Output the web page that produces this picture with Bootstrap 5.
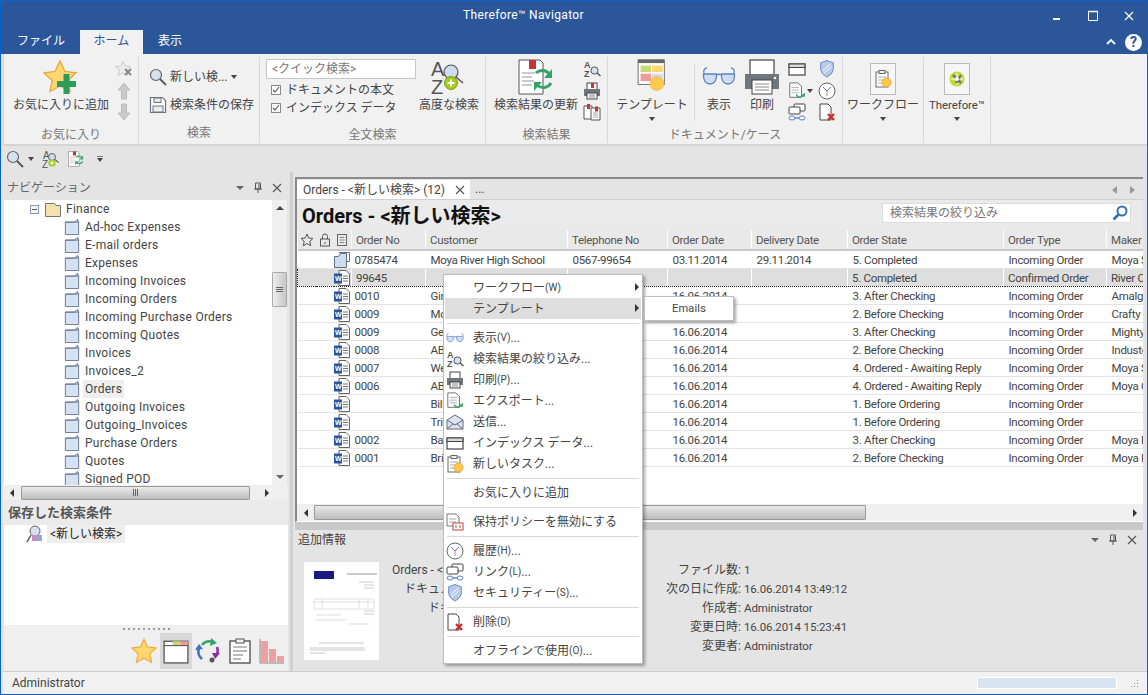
<!DOCTYPE html>
<html lang="ja">
<head>
<meta charset="utf-8">
<title>Therefore Navigator</title>
<link href="https://cdn.jsdelivr.net/npm/bootstrap@5.3.0/dist/css/bootstrap.min.css" rel="stylesheet">
<style>
html,body{margin:0;height:100%;overflow:hidden;background:#e4e4e4}
body,.win,.win .table,.win input{font-family:Roboto,"Noto Sans CJK JP",sans-serif;font-size:12px;color:#444;line-height:18px}
.win{position:relative;width:1148px;height:695px;border:1px solid #0a62c6;background:#e4e4e4;overflow:hidden;display:flex;flex-direction:column}
svg{display:block;flex:none}
.i14{width:14px;height:14px}.i16{width:16px;height:16px}.i18{width:18px;height:18px}.i20{width:20px;height:20px}
.i26{width:26px;height:26px}.i36{width:36px;height:36px}.i34{width:34px;height:20px}
.tbar{height:29px;background:#2b579a;color:#fff;flex:none;position:relative}
.ttl{padding-left:462px;line-height:29px;color:#fff;letter-spacing:.35px}
.wbtns{position:absolute;right:0;top:0;height:29px}
.wb{width:36px;height:29px;display:flex;align-items:center;justify-content:center}
.tabs{height:24px;background:#2b579a;flex:none;padding-left:1px}
.rtab{height:24px;line-height:23px;font-size:12px;color:#fff;padding:0 15px}
.rtab-a{background:#f1f1f1;color:#2b579a;padding:0 13.5px;width:63px}
.rtab-f{width:78px;padding:0 0 0 15px}
.rhelp{margin-left:auto;gap:7px;padding-right:5px}
.qm{width:17px;height:17px;border-radius:50%;background:#fff;color:#2b579a;font-weight:700;font-size:14px;line-height:17px;text-align:center}
.ribbon{height:92px;flex:none;background:#f1f1f1;margin-left:2px;border-left:1px solid #d4d4d4;border-bottom:2px solid #d4d4d4}
.rg{height:86px;margin-top:3px;border-right:1px solid #d8d8d8;position:relative;display:flex;flex-direction:column}
.rg1{width:135px;padding-left:8px}.rg2{width:121px;padding-left:10px}.rg3{width:226px;padding-left:6px}.rg4{width:122px;padding-left:8px}.rg5{width:235px;padding-left:7px}.rg6{width:81px}.rg7{width:67px}
.rb{height:66px;display:flex;padding-top:1px}
.rl{height:20px;line-height:20px;text-align:center;color:#777;margin-top:2px}
.rg1 .rl{margin-left:-8px}.rg2 .rl{margin-left:-10px}.rg3 .rl{margin-left:-6px}.rg4 .rl{margin-left:-8px}.rg5 .rl{margin-left:-7px}
.big{display:flex;flex-direction:column;align-items:center;white-space:nowrap;height:66px}
.big-i{height:38px;display:flex;align-items:center;justify-content:center}
.bw98{width:98px}.bw62{width:62px;margin-left:2px}.bw84{width:84px}.bw74{width:74px}.bw32{width:32px}.bw28{width:28px;margin-left:13px}.bw80{width:80px}.bw66{width:66px}
.dcar{width:0;height:0;border:3px solid transparent;border-top:4px solid #444;border-bottom:0;display:block}
.big .dcar{margin-top:3px}
.thf{font-size:11.5px;letter-spacing:-.1px}
.smc{width:18px;display:flex;flex-direction:column;align-items:center}
.smc>*{height:22px;display:flex;align-items:center;justify-content:center}
.smc1{margin-left:5px}.smc2{margin-left:12px}
.vs{width:1px;height:57px;background:#d8d8d8;margin:6px 8px 0 5px}
.ecar{position:absolute;left:19px;top:9px}
.lrow{height:28px;display:flex;align-items:center;gap:3px;white-space:nowrap}
.srch-col{margin-top:5px}
.qcol{width:150px}
.qk{height:20px;border:1px solid #c8c8c8;background:#fff;color:#777;padding:0 5px;line-height:18px;margin-top:1px;width:150px;display:block;border-radius:0;outline:0}
.qk::placeholder,.fbox::placeholder{color:#777;opacity:1}
.crow{height:18px;display:flex;align-items:center;padding-left:5px;gap:5px;white-space:nowrap}
.crow1{margin-top:2px}
.cbx{width:10px;height:10px;border:1px solid #888;background:#fff;position:relative;flex:none;display:flex;align-items:center;justify-content:center}
.bx{width:26px;height:32px;border:1px solid #bbb;background:#f6f6f6;display:flex;align-items:center;justify-content:center;margin-top:4px}
.qat{height:26px;flex:none;padding-left:5px;gap:0}
.qmore{display:flex;flex-direction:column;align-items:center;gap:1px;margin-left:13px}
.qmore::before{content:"";width:6px;height:1px;background:#777}
.main{height:499px;flex:none;display:flex}
.lft{width:285px;margin-left:2px;flex:none;display:flex;flex-direction:column}
.phd{height:28px;flex:none;display:flex;align-items:center;padding:3px 0 0 4px;font-size:12px;color:#666}
.pct{margin-left:auto;display:flex;align-items:center;gap:9px;padding-right:6px}
.treew{height:285px;flex:none;display:flex}
.tree{width:268px;background:#fff;overflow:hidden;padding-top:0;margin-left:1px}
.tn{height:18px;display:flex;align-items:center;white-space:nowrap;padding-left:60px;gap:5px;letter-spacing:.25px}
.tn-r{padding-left:26px}
.tn-r .mbx{width:9px;height:9px;border:1px solid #8a9ab5;background:#f4f4f4;display:flex;align-items:center;justify-content:center;margin-right:3px}
.mbx::before{content:"";width:5px;height:1px;background:#566}
.sel-t{background:#eee;padding:0 2px;margin-left:-2px;line-height:18px}
.tf{margin-left:-2px}
.vsb{width:15px;flex:none;background:#efefef;position:relative;display:flex;flex-direction:column;align-items:center;justify-content:space-between;padding:6px 0}
.vth{position:absolute;left:0;top:72px;width:15px;height:35px;background:linear-gradient(90deg,#eee,#c6c6c6);border:1px solid #aaa;border-radius:1px;display:flex;align-items:center;justify-content:center}
.grp3{width:7px;height:5px;border-top:1px solid #666;border-bottom:1px solid #666;position:relative}
.grp3::after{content:"";position:absolute;left:0;right:0;top:1px;height:1px;background:#666}
.hgrp{width:5px;height:7px;border-left:1px solid #666;border-right:1px solid #666;position:relative}
.hgrp::after{content:"";position:absolute;top:0;bottom:0;left:1px;width:1px;background:#666}
.hsb{height:15px;flex:none;background:#efefef;display:flex;align-items:center}
.hth{height:14px;background:linear-gradient(#e9e9e9,#bdbdbd);border:1px solid #999;border-radius:1px;display:flex;align-items:center;justify-content:center}
.ar{width:18px;display:flex;justify-content:center;flex:none}
.tl{border:4px solid transparent;border-right:4px solid #333;border-left:0;width:0;height:0}
.tr{border:4px solid transparent;border-left:4px solid #333;border-right:0;width:0;height:0}
.tu{border:4px solid transparent;border-bottom:4px solid #444;border-top:0;width:0;height:0}
.td{border:4px solid transparent;border-top:4px solid #666;border-bottom:0;width:0;height:0}
.hth-l{width:229px}
.sav{height:25px;flex:none;background:#ebebeb;font-weight:700;font-size:13px;padding-left:5px;line-height:25px;color:#555}
.savb{height:100px;flex:none;background:#fff;margin-left:1px;padding-left:22px}
.savr{display:flex;align-items:center;height:18px;gap:3px}
.savt{background:#eee;color:#222;padding:0 3px;height:18px}
.lbot{height:46px;flex:none;display:flex;flex-direction:column;margin-left:1px;background:#efefef}
.dots{height:8px;display:flex;justify-content:center;gap:3px;padding-top:3px}
.dots i{width:2px;height:2px;background:#999;display:block}
.tools{height:36px;display:flex;justify-content:flex-end;align-items:stretch}
.tb{width:32px;display:flex;align-items:center;justify-content:center}
.tb-a{background:#d8d8d8}
.splv{width:3px;flex:none;background:#d0d0d0;margin:0 2px}
.rgt{width:848px;flex:none;display:flex;flex-direction:column}
.docp{height:345px;margin-top:5px;flex:none;border-top:2px solid #8a8a8a;border-left:2px solid #8a8a8a;display:flex;flex-direction:column;background:#e4e4e4;border-bottom:1px solid #fff}
.dtabs{height:21px;flex:none;display:flex;align-items:flex-end;border-bottom:1px solid #d0d0d0}
.dtab{width:173px;height:19px;background:#fff;display:flex;align-items:center;padding:0 5px 0 6px;white-space:nowrap}
.dtab span:last-child{margin-left:auto}
.dmore{padding:0 0 0 5px;line-height:19px}
.dnav{margin-left:auto;gap:13px;height:19px;padding-right:8px;display:flex;align-items:center}
.tlo{border:4px solid transparent;border-right:5px solid #999;border-left:0;width:0;height:0}
.tro{border:4px solid transparent;border-left:5px solid #999;border-right:0;width:0;height:0}
.dhead{height:30px;flex:none;background:#eaeaea;display:flex;align-items:center;padding-left:5px;padding-right:12px}
.dtt{font-size:20px;font-weight:700;color:#111;white-space:nowrap;line-height:30px;padding-top:1px}
.fboxw{margin-left:auto;width:249px;height:20px;background:#fff;border:1px solid #dcdcdc;display:flex;align-items:center;padding:0 2px 0 7px;margin-bottom:5px}
.fbox{border:0;outline:0;flex:1;min-width:0;background:transparent;padding:0;color:#777;font-size:12px}
.gridw{flex:1;overflow:hidden;background:#fff;min-height:0}
.win .grid{table-layout:fixed;width:953px;margin:0;border-collapse:collapse;--bs-table-bg:transparent;color:#444;font-size:11.5px;letter-spacing:-.3px}
.grid th{height:20px;background:#e9e9e9;font-weight:400;padding:1px 0 0 4px;border:0;border-left:1px solid #fff;border-bottom:2px solid #c9c9c9;color:#555;white-space:nowrap;overflow:hidden;vertical-align:middle;line-height:16px}
.grid th.ih{padding:0;border-left:0}
.grid th.ih svg{margin:0 auto}
.grid td{height:18px;padding:1px 0 0 5px;border:0;border-bottom:1px solid #e4e4e4;white-space:nowrap;overflow:hidden;vertical-align:middle;color:#444;line-height:16px;background:#fff}
.grid td.ih{padding:0}
.grid tr.sr td{background:#dedede;border-top:1px dotted #222;border-bottom:1px dotted #222;border-left:1px solid #fff;padding-left:4px}
.grid tr.sr td.ih{border-left:0;padding-left:0}
.grid tr.sr td.ib{border-left:1px dotted #222}
.c0{width:18px}.c1{width:74px}.c2{width:142px}.c3{width:100px}.c4{width:84px}.c5{width:96px}.c6{width:156px}.c7{width:103px}.c8{width:144px}
.grid .num{padding-left:3px}
.dsb{height:17px;flex:none;background:#efefef;display:flex;align-items:center}
.dsb .ar{width:17px}
.hth-d{width:552px;height:15px;flex:none}
.dsb .tail{margin-left:auto}
.splh{height:8px;flex:none;background:#c8c8c8}
.info{height:140px;flex:none;display:flex;flex-direction:column;position:relative;background:#e4e4e4}
.inh{height:18px;display:flex;align-items:center;padding-left:3px;margin-top:1px}
.inb{display:flex;padding-left:9px;margin-top:13px}
.thumb{width:75px;height:98px;background:#fff;flex:none}
.ilab{line-height:19px;text-align:right;white-space:nowrap;width:124px;margin-top:-1px;flex:none}
.ilab2{width:238px}
.ival{line-height:19px;margin-left:3px;margin-top:-1px;white-space:nowrap;font-size:11.5px;letter-spacing:-.1px}
.stat{height:23px;flex:none;background:#f1f1f1;border-top:1px solid #ccc;margin-left:2px;display:flex;align-items:center;padding-left:9px}
.prog{margin-left:auto;width:140px;height:12px;background:#d9e4f3;border:1px solid #fff;margin-right:13px}
.ctx{position:absolute;left:442px;top:273px;width:200px;background:#fff;border:1px solid #bcbcbc;padding:2px 1px;box-shadow:2px 2px 3px rgba(0,0,0,.35);z-index:5}
.mi{height:21px;display:flex;align-items:center;white-space:nowrap;position:relative;color:#444}
.mi-a{background:#dedede}
.mic{width:20px;display:flex;justify-content:center;margin-right:8px;flex:none}
.ks{font-size:10px}
.mar{position:absolute;right:2px;top:6px;border:4px solid transparent;border-left:4px solid #333;border-right:0}
.msep{height:8px;display:flex;align-items:center;padding:0 2px}
.msep::before{content:"";display:block;width:100%;height:1px;background:#d8d8d8}
.sub{position:absolute;left:643px;top:295px;width:90px;height:25px;background:#fff;border:1px solid #bcbcbc;box-shadow:2px 2px 3px rgba(0,0,0,.35);z-index:6;text-align:center;line-height:23px;color:#444;font-size:11px;letter-spacing:.2px}
</style>
</head>
<body>
<svg width="0" height="0" class="position-absolute" aria-hidden="true">
<defs>
<symbol id="star" viewBox="0 0 32 32"><polygon points="16,1.5 20.4,11 31,12.3 23.2,19.5 25.4,30 16,24.8 6.6,30 8.8,19.5 1,12.3 11.6,11" fill="#ffd66f" stroke="#eba93c" stroke-width="1.4"/></symbol>
<symbol id="starplus" viewBox="0 0 36 36"><polygon points="17,2 21.8,12.4 33,13.8 24.8,21.4 27,32.5 17,27 7,32.5 9.2,21.4 1,13.8 12.2,12.4" fill="#ffd874" stroke="#eba93c" stroke-width="1.4"/><rect x="14" y="22" width="19" height="6" fill="#2f9b58"/><rect x="20.5" y="15" width="6" height="20" fill="#2f9b58"/></symbol>
<symbol id="starx" viewBox="0 0 18 18"><polygon points="8,1 10.2,6 15.5,6.6 11.6,10.2 12.7,15.5 8,12.9 3.3,15.5 4.4,10.2 .5,6.6 5.8,6" fill="#ececec" stroke="#ccc"/><path d="M10 9l6 6M16 9l-6 6" stroke="#888" stroke-width="2"/></symbol>
<symbol id="up" viewBox="0 0 18 18"><path d="M9 1l6 7h-3.5v9h-5V8H3z" fill="#c9c9c9" stroke="#bdbdbd"/></symbol>
<symbol id="down" viewBox="0 0 18 18"><path d="M9 17l6-7h-3.5V1h-5v9H3z" fill="#c9c9c9" stroke="#bdbdbd"/></symbol>
<symbol id="lens" viewBox="0 0 18 18"><circle cx="7" cy="7" r="5.5" fill="#d5e1f1" stroke="#666" stroke-width="1.2"/><path d="M11 11l6 6" stroke="#555" stroke-width="1.8"/></symbol>
<symbol id="floppy" viewBox="0 0 18 18"><path d="M1.5 1.5h12l3 3v12h-15z" fill="#fff" stroke="#6b7280" stroke-width="1.2"/><rect x="5" y="2" width="7" height="4.5" fill="#e8e8e8" stroke="#6b7280"/><rect x="4" y="10" width="10" height="6" fill="#eee" stroke="#6b7280"/></symbol>
<symbol id="azs" viewBox="0 0 18 18"><text x="1" y="8" font-size="9" font-weight="700" fill="#555" font-family="Liberation Sans">A</text><text x="1" y="17" font-size="9" font-weight="700" fill="#555" font-family="Liberation Sans">Z</text><circle cx="11.5" cy="10.5" r="3.6" fill="#d5e1f1" stroke="#555"/><path d="M14 13l3.5 3" stroke="#555" stroke-width="1.5"/></symbol>
<symbol id="azl" viewBox="0 0 36 36"><text x="0" y="17" font-size="20" fill="#555" font-family="Liberation Sans">A</text><text x="0" y="35" font-size="20" fill="#555" font-family="Liberation Sans">Z</text><circle cx="20" cy="13" r="7" fill="#cfdcee" stroke="#555" stroke-width="1.2"/><path d="M25 18l7 6" stroke="#555" stroke-width="1.6"/><circle cx="20" cy="24" r="6.5" fill="#a3cc1e" stroke="#7ca010"/><path d="M16.5 24h7M20 20.5v7" stroke="#fff" stroke-width="2"/></symbol>
<symbol id="azq" viewBox="0 0 18 18"><text x="1" y="9" font-size="10" fill="#555" font-family="Liberation Sans">A</text><text x="0" y="18" font-size="10" fill="#555" font-family="Liberation Sans">Z</text><circle cx="10" cy="7" r="3.5" fill="#cfdcee" stroke="#666"/><path d="M13 9.5l3.5 3" stroke="#666" stroke-width="1.2"/><circle cx="10" cy="13" r="3.6" fill="#a3cc1e"/><path d="M8 13h4M10 11v4" stroke="#fff"/></symbol>
<symbol id="rdoc" viewBox="0 0 36 36"><path d="M1 1h21l3 3v31H1z" fill="#fff" stroke="#555"/><rect x="11" y="1" width="7" height="9" fill="#c8323c"/><path d="M4 14h13M4 18h10M4 22h12M4 26h10" stroke="#bbb" stroke-width="1.4"/><path d="M18 14a9 9 0 0 1 14 2" fill="none" stroke="#35a36a" stroke-width="3"/><path d="M34 10v9h-8z" fill="#35a36a"/><path d="M33 24a9 9 0 0 1-14 2" fill="none" stroke="#35a36a" stroke-width="3"/><path d="M16 32v-9h8z" fill="#35a36a"/></symbol>
<symbol id="printer" viewBox="0 0 36 36"><rect x="6" y="1" width="24" height="18" fill="#fff" stroke="#444" stroke-width="1.2"/><path d="M1 15h34v15H1z" fill="#6f767d"/><rect x="8" y="21" width="20" height="14" fill="#fff" stroke="#444"/><path d="M11 25h14M11 28h14M11 31h14" stroke="#888"/><circle cx="31" cy="19" r="1.2" fill="#fff"/></symbol>
<symbol id="print-s" viewBox="0 0 18 18"><rect x="4" y="1" width="10" height="8" fill="#fff" stroke="#444"/><rect x="8" y="1" width="3" height="5" fill="#c8323c"/><path d="M1 7h16v7H1z" fill="#6f767d"/><rect x="4" y="11" width="10" height="6" fill="#fff" stroke="#444"/><path d="M6 13h6M6 15h6" stroke="#888"/></symbol>
<symbol id="print-m" viewBox="0 0 18 18"><rect x="4" y="1" width="10" height="8" fill="#fff" stroke="#444"/><path d="M1 7h16v7H1z" fill="#6f767d"/><rect x="4" y="11" width="10" height="6" fill="#fff" stroke="#444"/><path d="M6 13h6M6 15h6" stroke="#888"/></symbol>
<symbol id="copies" viewBox="0 0 18 18"><path d="M1 3h8v13H1z" fill="#fff" stroke="#555"/><rect x="4" y="1" width="3" height="5" fill="#c8323c"/><path d="M8 5h9v12H8z" fill="#fff" stroke="#555"/><rect x="12" y="3.5" width="3" height="5" fill="#c8323c"/><path d="M10 10h5M10 12h5M10 14h5" stroke="#aaa"/></symbol>
<symbol id="tmpl" viewBox="0 0 36 44"><rect x="1" y="1" width="32" height="30" fill="#fff" stroke="#555"/><rect x="1" y="1" width="32" height="4" fill="#666"/><rect x="4" y="8" width="13" height="8" fill="#c8d96f"/><rect x="18" y="8" width="13" height="8" fill="#ffd66f"/><rect x="4" y="18" width="13" height="9" fill="#f09a9a"/><rect x="18" y="18" width="13" height="9" fill="#cfdcee"/><circle cx="24" cy="30" r="8.5" fill="#ffc94d" stroke="#eba93c" stroke-dasharray="2 1"/></symbol>
<symbol id="glass" viewBox="0 0 34 20"><path d="M2 6c-1-3 1-5 3-5M32 6c1-3-1-5-3-5" fill="none" stroke="#5b83c4" stroke-width="1.3"/><path d="M1.5 7h13c.5 6-2 10-6.500 10S1 13 1.500 7zM19.500 7h13c.5 6-2 10-6.500 10s-7-4-6.500-10zM14.500 8q2.500-1.500 5 0" fill="#cfdcf1" stroke="#5b83c4" stroke-width="1.3"/></symbol>
<symbol id="card" viewBox="0 0 18 18"><rect x="1" y="4" width="16" height="11" fill="#fff" stroke="#444" stroke-width="1.200"/><rect x="1" y="4" width="16" height="3.500" fill="#d9d9d9" stroke="#444"/></symbol>
<symbol id="export" viewBox="0 0 18 20"><path d="M1 1h9l4 4v12H1z" fill="#fff" stroke="#666"/><path d="M3 6h8M3 9h8M3 12h8" stroke="#aaa"/><path d="M8 14q3 5 8 1" fill="none" stroke="#35a36a" stroke-width="1.600"/><path d="M18 12l-.5 5-4-2z" fill="#35a36a"/></symbol>
<symbol id="link" viewBox="0 0 18 18"><rect x="6" y="1" width="11" height="7" rx="1" fill="#fff" stroke="#444"/><rect x="1" y="4" width="11" height="7" rx="1" fill="#fff" stroke="#444"/><path d="M3 15h12" stroke="#5b83c4" stroke-width="1.500"/><ellipse cx="4" cy="15" rx="3" ry="2" fill="#fff" stroke="#5b83c4"/><ellipse cx="14" cy="15" rx="3" ry="2" fill="#fff" stroke="#5b83c4"/></symbol>
<symbol id="shield" viewBox="0 0 18 20"><path d="M2 3q4-1 7-2.500 3 1.500 7 2.500v8q-1 5-7 8-6-3-7-8z" fill="#b8cbe6" stroke="#5b83c4"/><path d="M4 12l9-8M5 15l9-8" stroke="#fff"/></symbol>
<symbol id="clock" viewBox="0 0 18 18"><circle cx="9" cy="9" r="8" fill="#fff" stroke="#666"/><path d="M9 9L5 5M9 9l4-4" stroke="#5b83c4"/><path d="M9 9v5" stroke="#e07a7a"/></symbol>
<symbol id="del" viewBox="0 0 18 18"><path d="M2 1h8l3 3v13H2z" fill="#fff" stroke="#444"/><path d="M10 11l6 6M16 11l-6 6" stroke="#d02c2c" stroke-width="2.400"/></symbol>
<symbol id="task" viewBox="0 0 18 18"><rect x="2" y="2" width="12" height="15" fill="#fff" stroke="#666"/><rect x="5" y="0.500" width="6" height="3" fill="#eee" stroke="#666"/><path d="M4 7h8M4 10h5M4 13h4" stroke="#aaa"/><circle cx="12.500" cy="12.500" r="4.500" fill="#ffc94d" stroke="#eba93c"/></symbol>
<symbol id="mail" viewBox="0 0 18 18"><path d="M1 7l8-5 8 5v9H1z" fill="#dbe4f0" stroke="#667"/><path d="M1 7l8 5 8-5M1 16l6-5M17 16l-6-5" fill="none" stroke="#667"/></symbol>
<symbol id="ret" viewBox="0 0 18 18"><path d="M1 1h9l3 3v9H1z" fill="#fff" stroke="#777"/><path d="M3 6h7M3 9h7" stroke="#aaa"/><rect x="7" y="10" width="10" height="7" fill="#fff" stroke="#d03a3a"/><path d="M10 12v3M14 12v3" stroke="#666"/></symbol>
<symbol id="fold" viewBox="0 0 16 18"><path d="M.5 3.500h10l4-3v2h1v15H.5z" fill="#d5e2f3" stroke="#5f6f85"/><path d="M.5 3.500h15" stroke="#5f6f85"/></symbol>
<symbol id="folde" viewBox="0 0 16 16"><path d="M.5 2.500h9l1.500 2h4.500v11H.5z" fill="#f5e1ae" stroke="#777"/><path d="M.5 2.500h9" stroke="#777"/></symbol>
<symbol id="dw" viewBox="0 0 16 16"><path d="M5 .5h7l3.500 3.500v11.500H5z" fill="#fff" stroke="#666"/><path d="M9 6h5M9 8.500h5M9 11h5" stroke="#777"/><rect x="0" y="3.500" width="8" height="10" fill="#2b579a"/><text x="1" y="11" font-size="7" font-weight="700" fill="#fff" font-family="Liberation Sans">W</text></symbol>
<symbol id="dfold" viewBox="0 0 16 16"><path d="M5 .5h10.500v9H12" fill="#fff" stroke="#5f6f85"/><path d="M.5 4.500h4l2-3h6v14H.5z" fill="#cfdcee" stroke="#5f6f85"/></symbol>
<symbol id="staro" viewBox="0 0 14 14"><polygon points="7,1 8.700,5 13,5.400 9.800,8.300 10.700,12.800 7,10.500 3.300,12.800 4.200,8.300 1,5.400 5.300,5" fill="none" stroke="#555"/></symbol>
<symbol id="lock" viewBox="0 0 14 14"><rect x="2.500" y="6" width="9" height="7" fill="none" stroke="#555"/><path d="M4.500 6V3.500a2.500 2.500 0 0 1 5 0V6M7 9v2" fill="none" stroke="#555"/></symbol>
<symbol id="pdoc" viewBox="0 0 14 14"><rect x="2.500" y="1.500" width="9" height="11" fill="none" stroke="#666"/><path d="M4.500 4.500h5M4.500 7h5M4.500 9.500h5" stroke="#888"/></symbol>
<symbol id="pin" viewBox="0 0 10 12"><path d="M2.500 1h5v6h-5zM1 7h8M5 7v4M6 2v4" fill="none" stroke="#555"/></symbol>
<symbol id="xs" viewBox="0 0 10 10"><path d="M1 1l8 8M9 1L1 9" stroke="#555" stroke-width="1.100"/></symbol>
<symbol id="cmag" viewBox="0 0 16 16"><circle cx="10" cy="6" r="4.500" fill="#fff" stroke="#2e75b6" stroke-width="2"/><path d="M6.500 9.500L1.500 14.500" stroke="#2e75b6" stroke-width="2.600"/></symbol>
<symbol id="sn" viewBox="0 0 18 18"><circle cx="9" cy="6" r="5" fill="#d5e1f1" stroke="#666"/><path d="M5 10l-4 7" stroke="#555" stroke-width="1.500"/><rect x="6" y="10" width="5" height="6" fill="#c58fc0"/><rect x="11" y="10" width="5" height="6" fill="#8fa8d8"/></symbol>
<symbol id="t-win" viewBox="0 0 24 24"><rect x="1" y="3" width="22" height="20" fill="#fff" stroke="#555" stroke-width="1.200"/><path d="M1 7h22" stroke="#555"/><rect x="9" y="3" width="7" height="3.500" fill="#c8d96f"/><rect x="16" y="3" width="7" height="3.500" fill="#f09a9a"/></symbol>
<symbol id="t-cyc" viewBox="0 0 26 26"><path d="M7 7A10 10 0 0 1 18 4" fill="none" stroke="#35a36a" stroke-width="2.600"/><path d="M16 0l6 5-7 3z" fill="#35a36a"/><path d="M22 9a10 10 0 0 1-1 9" fill="none" stroke="#8b2fa8" stroke-width="2.600"/><path d="M25 15l-5 6-3-6z" fill="#8b2fa8"/><path d="M7 21A10 10 0 0 1 4 10" fill="none" stroke="#3f72c4" stroke-width="2.600"/><path d="M0 12l4-6 4 5z" fill="#3f72c4"/><circle cx="17" cy="22" r="2.500" fill="#555"/></symbol>
<symbol id="t-clip" viewBox="0 0 22 26"><rect x="1" y="3" width="20" height="22" fill="#fff" stroke="#555" stroke-width="1.400"/><rect x="7" y="1" width="8" height="4" fill="#eee" stroke="#555"/><path d="M4 9h14M4 13h14M4 17h10M4 21h8" stroke="#777"/></symbol>
<symbol id="t-bar" viewBox="0 0 26 26"><path d="M1 1v24h24" fill="none" stroke="#888"/><rect x="2" y="3" width="7" height="21" fill="#ee9f9f"/><rect x="10" y="11" width="7" height="13" fill="#ee9f9f"/><rect x="18" y="18" width="7" height="6" fill="#ee9f9f"/></symbol>
<symbol id="logo" viewBox="0 0 18 18"><circle cx="9" cy="9" r="7.500" fill="#c3d631"/><path d="M3 9h12M9 3v12" stroke="#fff" stroke-width="1"/><path d="M5 5l8 8M13 5l-5 8" stroke="#57708f" stroke-width="2"/><circle cx="9" cy="9" r="2" fill="#fff"/></symbol>
</defs>
</svg>
<div class="win">
  <div class="tbar">
    <div class="ttl">Therefore™ Navigator</div>
    <div class="wbtns d-flex">
      <div class="wb"><svg class="i14" viewBox="0 0 14 14"><rect x="3" y="9" width="7" height="2" fill="#fff"/></svg></div>
      <div class="wb"><svg class="i14" viewBox="0 0 14 14"><path d="M2.500 2.500h9v9h-9z" fill="none" stroke="#fff"/><path d="M2 2.500h10" stroke="#fff" stroke-width="1.500"/></svg></div>
      <div class="wb"><svg class="i14" viewBox="0 0 14 14"><path d="M3 3l8 8M11 3l-8 8" stroke="#fff" stroke-width="1.200"/></svg></div>
    </div>
  </div>
  <div class="tabs d-flex">
    <div class="rtab rtab-f">ファイル</div>
    <div class="rtab rtab-a">ホーム</div>
    <div class="rtab">表示</div>
    <div class="rhelp d-flex align-items-center">
      <svg class="i14" viewBox="0 0 14 14"><path d="M3 9l4-4 4 4" fill="none" stroke="#fff" stroke-width="1.800"/></svg>
      <div class="qm">?</div>
    </div>
  </div>
  <div class="ribbon d-flex">
    <div class="rg rg1">
      <div class="rb">
        <div class="big bw98"><div class="big-i"><svg class="i36"><use href="#starplus"/></svg></div><div>お気に入りに追加</div></div>
        <div class="smc smc1"><span><svg class="i18"><use href="#starx"/></svg></span><span><svg class="i18"><use href="#up"/></svg></span><span><svg class="i18"><use href="#down"/></svg></span></div>
      </div>
      <div class="rl">お気に入り</div>
    </div>
    <div class="rg rg2">
      <div class="rb">
        <div class="srch-col">
          <div class="lrow"><svg class="i18"><use href="#lens"/></svg><span>新しい検...</span><span class="dcar"></span></div>
          <div class="lrow"><svg class="i18"><use href="#floppy"/></svg><span>検索条件の保存</span></div>
        </div>
      </div>
      <div class="rl">検索</div>
    </div>
    <div class="rg rg3">
      <div class="rb">
        <div class="qcol">
          <input class="qk" type="text" placeholder="&lt;クイック検索&gt;" aria-label="クイック検索">
          <div class="crow crow1"><span class="cbx"><svg width="8" height="8" viewBox="0 0 8 8"><path d="M1 4l2 2 4-5" fill="none" stroke="#555" stroke-width="1.100"/></svg></span>ドキュメントの本文</div>
          <div class="crow"><span class="cbx"><svg width="8" height="8" viewBox="0 0 8 8"><path d="M1 4l2 2 4-5" fill="none" stroke="#555" stroke-width="1.100"/></svg></span>インデックス データ</div>
        </div>
        <div class="big bw62"><div class="big-i"><svg class="i36"><use href="#azl"/></svg></div><div>高度な検索</div></div>
      </div>
      <div class="rl">全文検索</div>
    </div>
    <div class="rg rg4">
      <div class="rb">
        <div class="big bw84"><div class="big-i"><svg class="i36"><use href="#rdoc"/></svg></div><div>検索結果の更新</div></div>
        <div class="smc smc1"><span><svg class="i18"><use href="#azs"/></svg></span><span><svg class="i18"><use href="#print-s"/></svg></span><span><svg class="i18"><use href="#copies"/></svg></span></div>
      </div>
      <div class="rl">検索結果</div>
    </div>
    <div class="rg rg5">
      <div class="rb">
        <div class="big bw74"><div class="big-i"><svg class="i36"><use href="#tmpl"/></svg></div><div>テンプレート</div><span class="dcar"></span></div>
        <div class="vs"></div>
        <div class="big bw32"><div class="big-i"><svg class="i34"><use href="#glass"/></svg></div><div>表示</div></div>
        <div class="big bw28"><div class="big-i"><svg class="i36"><use href="#printer"/></svg></div><div>印刷</div></div>
        <div class="smc smc2"><span><svg class="i18"><use href="#card"/></svg></span><span class="position-relative"><svg class="i18"><use href="#export"/></svg><span class="dcar ecar"></span></span><span><svg class="i18"><use href="#link"/></svg></span></div>
        <div class="smc smc2"><span><svg class="i18"><use href="#shield"/></svg></span><span><svg class="i18"><use href="#clock"/></svg></span><span><svg class="i18"><use href="#del"/></svg></span></div>
      </div>
      <div class="rl">ドキュメント/ケース</div>
    </div>
    <div class="rg rg6">
      <div class="rb"><div class="big bw80"><div class="big-i"><div class="bx"><svg class="i18"><use href="#task"/></svg></div></div><div>ワークフロー</div><span class="dcar"></span></div></div>
    </div>
    <div class="rg rg7">
      <div class="rb"><div class="big bw66"><div class="big-i"><div class="bx"><svg class="i18"><use href="#logo"/></svg></div></div><div class="thf">Therefore™</div><span class="dcar"></span></div></div>
    </div>
  </div>
  <div class="qat d-flex align-items-center">
    <svg class="i18"><use href="#lens"/></svg><span class="dcar ms-1 me-2"></span>
    <svg class="i18"><use href="#azq"/></svg>
    <svg class="i16 ms-2"><use href="#rdoc"/></svg>
    <span class="qmore"><span class="dcar"></span></span>
  </div>
  <div class="main">
    <div class="lft">
      <div class="phd">ナビゲーション<div class="pct"><span class="td"></span><svg width="10" height="12"><use href="#pin"/></svg><svg width="10" height="10"><use href="#xs"/></svg></div></div>
      <div class="treew">
        <div class="tree">
          <div class="tn tn-r"><span class="mbx"></span><svg class="i16 tf"><use href="#folde"/></svg><span>Finance</span></div>
          <div class="tn"><svg class="i16"><use href="#fold"/></svg><span>Ad-hoc Expenses</span></div>
          <div class="tn"><svg class="i16"><use href="#fold"/></svg><span>E-mail orders</span></div>
          <div class="tn"><svg class="i16"><use href="#fold"/></svg><span>Expenses</span></div>
          <div class="tn"><svg class="i16"><use href="#fold"/></svg><span>Incoming Invoices</span></div>
          <div class="tn"><svg class="i16"><use href="#fold"/></svg><span>Incoming Orders</span></div>
          <div class="tn"><svg class="i16"><use href="#fold"/></svg><span>Incoming Purchase Orders</span></div>
          <div class="tn"><svg class="i16"><use href="#fold"/></svg><span>Incoming Quotes</span></div>
          <div class="tn"><svg class="i16"><use href="#fold"/></svg><span>Invoices</span></div>
          <div class="tn"><svg class="i16"><use href="#fold"/></svg><span>Invoices_2</span></div>
          <div class="tn"><svg class="i16"><use href="#fold"/></svg><span class="sel-t">Orders</span></div>
          <div class="tn"><svg class="i16"><use href="#fold"/></svg><span>Outgoing Invoices</span></div>
          <div class="tn"><svg class="i16"><use href="#fold"/></svg><span>Outgoing_Invoices</span></div>
          <div class="tn"><svg class="i16"><use href="#fold"/></svg><span>Purchase Orders</span></div>
          <div class="tn"><svg class="i16"><use href="#fold"/></svg><span>Quotes</span></div>
          <div class="tn"><svg class="i16"><use href="#fold"/></svg><span>Signed POD</span></div>
        </div>
        <div class="vsb"><span class="tu"></span><div class="vth"><span class="grp3"></span></div><span class="td"></span></div>
      </div>
      <div class="hsb"><span class="ar"><span class="tl"></span></span><div class="hth hth-l"><span class="hgrp"></span></div><span class="ar ms-2"><span class="tr"></span></span></div>
      <div class="sav">保存した検索条件</div>
      <div class="savb"><div class="savr"><svg class="i18"><use href="#sn"/></svg><span class="savt">&lt;新しい検索&gt;</span></div></div>
      <div class="lbot">
        <div class="dots"><i></i><i></i><i></i><i></i><i></i><i></i><i></i><i></i><i></i><i></i></div>
        <div class="tools">
          <div class="tb"><svg class="i26"><use href="#star"/></svg></div>
          <div class="tb tb-a"><svg class="i26"><use href="#t-win"/></svg></div>
          <div class="tb"><svg class="i26"><use href="#t-cyc"/></svg></div>
          <div class="tb"><svg class="i26"><use href="#t-clip"/></svg></div>
          <div class="tb"><svg class="i26"><use href="#t-bar"/></svg></div>
        </div>
      </div>
    </div>
    <div class="splv"></div>
    <div class="rgt">
      <div class="docp">
        <div class="dtabs">
          <div class="dtab"><span>Orders - &lt;新しい検索&gt; (12)</span><span><svg width="10" height="10"><use href="#xs"/></svg></span></div>
          <span class="dmore">...</span>
          <div class="dnav"><span class="tlo"></span><span class="tro"></span></div>
        </div>
        <div class="dhead"><div class="dtt">Orders - &lt;新しい検索&gt;</div>
          <div class="fboxw"><input class="fbox" type="text" placeholder="検索結果の絞り込み" aria-label="検索結果の絞り込み"><svg class="i16"><use href="#cmag"/></svg></div>
        </div>
        <div class="gridw">
          <table class="table grid">
            <colgroup><col class="c0"><col class="c0"><col class="c0"><col class="c1"><col class="c2"><col class="c3"><col class="c4"><col class="c5"><col class="c6"><col class="c7"><col class="c8"></colgroup>
            <thead><tr>
              <th class="ih"><svg class="i14"><use href="#staro"/></svg></th><th class="ih"><svg class="i14"><use href="#lock"/></svg></th><th class="ih"><svg class="i14"><use href="#pdoc"/></svg></th>
              <th>Order No</th><th>Customer</th><th>Telephone No</th><th>Order Date</th><th>Delivery Date</th><th>Order State</th><th>Order Type</th><th>Maker</th>
            </tr></thead>
            <tbody>
              <tr><td class="ih"></td><td class="ih"></td><td class="ih"><svg class="i16"><use href="#dfold"/></svg></td><td class="num">0785474</td><td>Moya River High School</td><td>0567-99654</td><td>03.11.2014</td><td>29.11.2014</td><td>5. Completed</td><td>Incoming Order</td><td>Moya School</td></tr>
              <tr class="sr"><td class="ih ib"></td><td class="ih"></td><td class="ih"><svg class="i16"><use href="#dw"/></svg></td><td class="num">99645</td><td></td><td></td><td></td><td></td><td>5. Completed</td><td>Confirmed Order</td><td>River City</td></tr>
              <tr><td class="ih"></td><td class="ih"></td><td class="ih"><svg class="i16"><use href="#dw"/></svg></td><td class="num">0010</td><td>Girls School</td><td></td><td>16.06.2014</td><td></td><td>3. After Checking</td><td>Incoming Order</td><td>Amalgamated</td></tr>
              <tr><td class="ih"></td><td class="ih"></td><td class="ih"><svg class="i16"><use href="#dw"/></svg></td><td class="num">0009</td><td>Moya</td><td></td><td>16.06.2014</td><td></td><td>2. Before Checking</td><td>Incoming Order</td><td>Crafty Co</td></tr>
              <tr><td class="ih"></td><td class="ih"></td><td class="ih"><svg class="i16"><use href="#dw"/></svg></td><td class="num">0009</td><td>George</td><td></td><td>16.06.2014</td><td></td><td>3. After Checking</td><td>Incoming Order</td><td>Mighty Co</td></tr>
              <tr><td class="ih"></td><td class="ih"></td><td class="ih"><svg class="i16"><use href="#dw"/></svg></td><td class="num">0008</td><td>ABC</td><td></td><td>16.06.2014</td><td></td><td>2. Before Checking</td><td>Incoming Order</td><td>Industeel</td></tr>
              <tr><td class="ih"></td><td class="ih"></td><td class="ih"><svg class="i16"><use href="#dw"/></svg></td><td class="num">0007</td><td>West</td><td></td><td>16.06.2014</td><td></td><td>4. Ordered - Awaiting Reply</td><td>Incoming Order</td><td>Moya School</td></tr>
              <tr><td class="ih"></td><td class="ih"></td><td class="ih"><svg class="i16"><use href="#dw"/></svg></td><td class="num">0006</td><td>ABC</td><td></td><td>16.06.2014</td><td></td><td>4. Ordered - Awaiting Reply</td><td>Incoming Order</td><td>Moya Co</td></tr>
              <tr><td class="ih"></td><td class="ih"></td><td class="ih"><svg class="i16"><use href="#dw"/></svg></td><td class="num"></td><td>Bill</td><td></td><td>16.06.2014</td><td></td><td>1. Before Ordering</td><td>Incoming Order</td><td></td></tr>
              <tr><td class="ih"></td><td class="ih"></td><td class="ih"><svg class="i16"><use href="#dw"/></svg></td><td class="num"></td><td>Tri</td><td></td><td>16.06.2014</td><td></td><td>1. Before Ordering</td><td>Incoming Order</td><td></td></tr>
              <tr><td class="ih"></td><td class="ih"></td><td class="ih"><svg class="i16"><use href="#dw"/></svg></td><td class="num">0002</td><td>Barry</td><td></td><td>16.06.2014</td><td></td><td>3. After Checking</td><td>Incoming Order</td><td>Moya River</td></tr>
              <tr><td class="ih"></td><td class="ih"></td><td class="ih"><svg class="i16"><use href="#dw"/></svg></td><td class="num">0001</td><td>Brian</td><td></td><td>16.06.2014</td><td></td><td>2. Before Checking</td><td>Incoming Order</td><td>Moya River</td></tr>
            </tbody>
          </table>
        </div>
        <div class="dsb"><span class="ar"><span class="tl"></span></span><div class="hth hth-d"></div><span class="ar tail"><span class="tr"></span></span></div>
      </div>
      <div class="splh"></div>
      <div class="info">
        <div class="inh">追加情報<div class="pct"><span class="td"></span><svg width="10" height="12"><use href="#pin"/></svg><svg width="10" height="10"><use href="#xs"/></svg></div></div>
        <div class="inb">
          <svg class="thumb" viewBox="0 0 75 98"><rect x="10" y="9" width="20" height="8" fill="#1a1a80"/><path d="M43 12h30" stroke="#ccc" stroke-width="2"/><path d="M55 20h15M60 23h10M60 26h10" stroke="#ccc"/><path d="M10 37h60v10H10zM10 40h60M18 37v10M55 37v10M64 37v10" fill="none" stroke="#ccc" stroke-width=".6"/><path d="M60 49h10M60 52h10" stroke="#ccc"/><path d="M12 53h25M12 58h30M45 62h20" stroke="#ddd"/><path d="M15 81h45M6 86h55M6 88h55M6 91h15" stroke="#bbb" stroke-width=".8"/></svg>
          <div class="ilab">Orders - &lt;新しい検索<br>ドキュメント番号:<br>ドキュメント:</div>
          <div class="ilab ilab2">ファイル数:<br>次の日に作成:<br>作成者:<br>変更日時:<br>変更者:</div>
          <div class="ival">1<br>16.06.2014 13:49:12<br>Administrator<br>16.06.2014 15:23:41<br>Administrator</div>
        </div>
      </div>
    </div>
  </div>
  <div class="stat"><span>Administrator</span><div class="prog"></div><svg width="9" height="9" class="me-2" viewBox="0 0 9 9"><path d="M7 1h1v1H7zM4 4h1v1H4zM7 4h1v1H7zM1 7h1v1H1zM4 7h1v1H4zM7 7h1v1H7z" fill="#999"/></svg></div>

  <div class="ctx">
    <div class="mi"><span class="mic"></span>ワークフロー<span class="ks">(W)</span><span class="mar"></span></div>
    <div class="mi mi-a"><span class="mic"></span>テンプレート<span class="mar"></span></div>
    <div class="msep"></div>
    <div class="mi"><span class="mic"><svg class="i18"><use href="#glass"/></svg></span>表示<span class="ks">(V)</span>...</div>
    <div class="mi"><span class="mic"><svg class="i18"><use href="#azs"/></svg></span>検索結果の絞り込み...</div>
    <div class="mi"><span class="mic"><svg class="i18"><use href="#print-m"/></svg></span>印刷<span class="ks">(P)</span>...</div>
    <div class="mi"><span class="mic"><svg class="i18"><use href="#export"/></svg></span>エクスポート...</div>
    <div class="mi"><span class="mic"><svg class="i18"><use href="#mail"/></svg></span>送信...</div>
    <div class="mi"><span class="mic"><svg class="i18"><use href="#card"/></svg></span>インデックス データ...</div>
    <div class="mi"><span class="mic"><svg class="i18"><use href="#task"/></svg></span>新しいタスク...</div>
    <div class="msep"></div>
    <div class="mi"><span class="mic"></span>お気に入りに追加</div>
    <div class="msep"></div>
    <div class="mi"><span class="mic"><svg class="i18"><use href="#ret"/></svg></span>保持ポリシーを無効にする</div>
    <div class="msep"></div>
    <div class="mi"><span class="mic"><svg class="i18"><use href="#clock"/></svg></span>履歴<span class="ks">(H)</span>...</div>
    <div class="mi"><span class="mic"><svg class="i18"><use href="#link"/></svg></span>リンク<span class="ks">(L)</span>...</div>
    <div class="mi"><span class="mic"><svg class="i18"><use href="#shield"/></svg></span>セキュリティー<span class="ks">(S)</span>...</div>
    <div class="msep"></div>
    <div class="mi"><span class="mic"><svg class="i18"><use href="#del"/></svg></span>削除<span class="ks">(D)</span></div>
    <div class="msep"></div>
    <div class="mi"><span class="mic"></span>オフラインで使用<span class="ks">(O)</span>...</div>
  </div>
  <div class="sub">Emails</div>
</div>
<script src="https://cdn.jsdelivr.net/npm/bootstrap@5.3.0/dist/js/bootstrap.bundle.min.js"></script>
</body>
</html>
